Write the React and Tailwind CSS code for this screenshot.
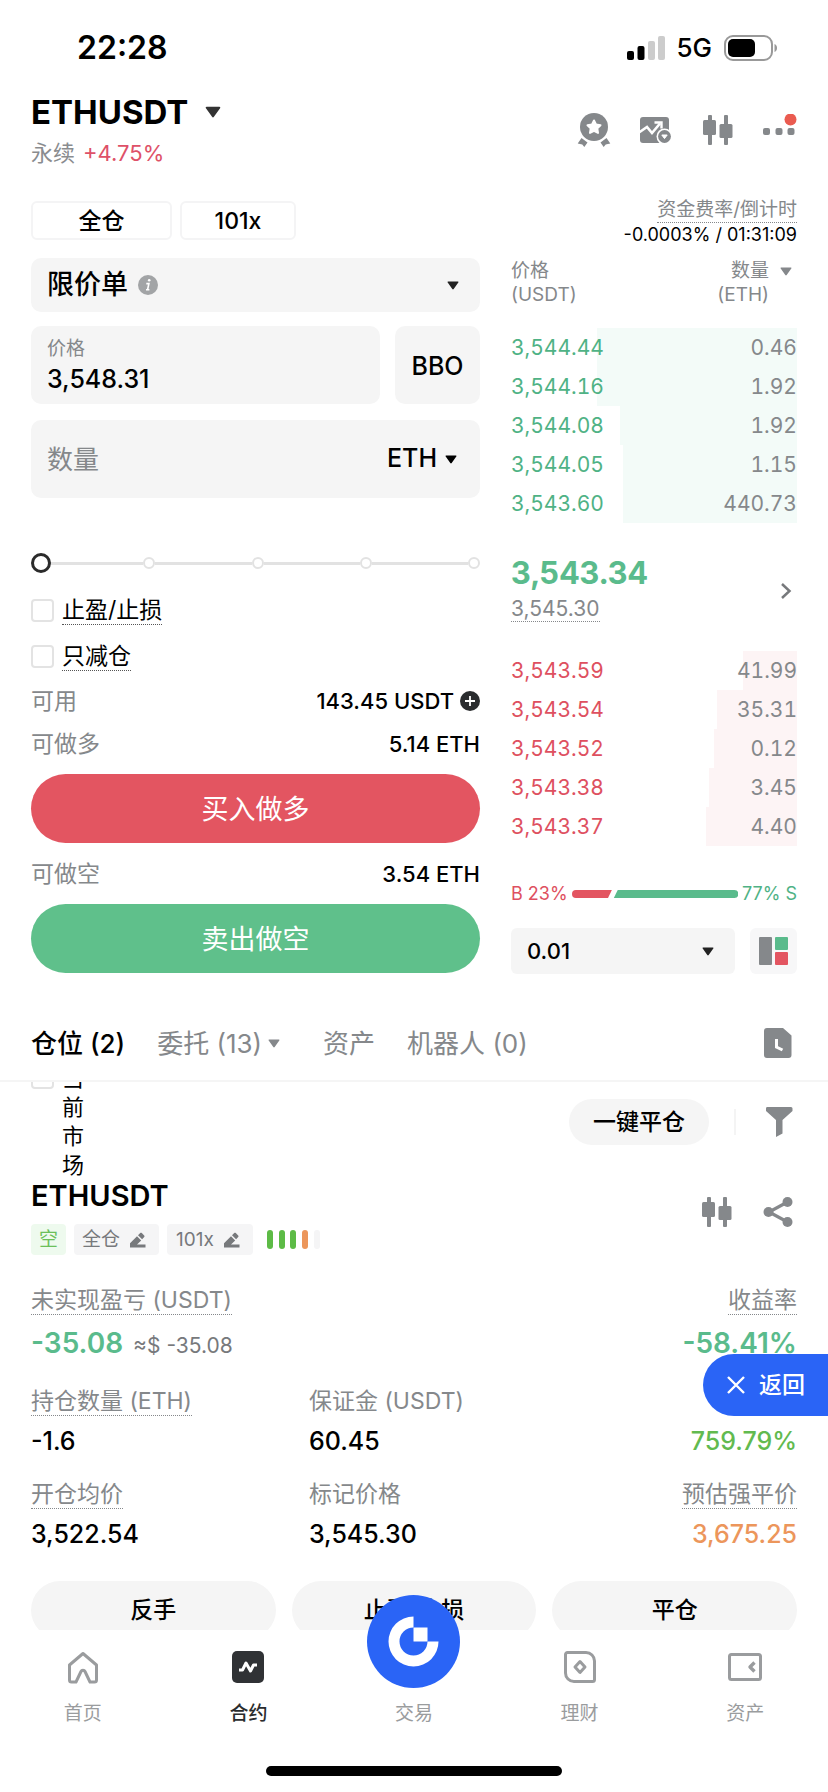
import React, { useState } from "react";

const bids = [
  { price: "3,544.44", amount: "0.46", depth: 70 },
  { price: "3,544.16", amount: "1.92", depth: 70 },
  { price: "3,544.08", amount: "1.92", depth: 62 },
  { price: "3,544.05", amount: "1.15", depth: 61 },
  { price: "3,543.60", amount: "440.73", depth: 61 },
];

const asks = [
  { price: "3,543.59", amount: "41.99", depth: 19 },
  { price: "3,543.54", amount: "35.31", depth: 28 },
  { price: "3,543.52", amount: "0.12", depth: 29 },
  { price: "3,543.38", amount: "3.45", depth: 31 },
  { price: "3,543.37", amount: "4.40", depth: 32 },
];

const Caret = ({ className }) => (
  <svg viewBox="0 0 12 9" className={className} fill="currentColor" aria-hidden="true">
    <path d="M1.2 0.5h9.6c.6 0 .9.7.5 1.1L6.7 8.1a.9.9 0 0 1-1.4 0L.7 1.6C.3 1.2.6.5 1.2.5z" />
  </svg>
);

const CandleIcon = ({ className }) => (
  <svg viewBox="0 0 32 32" className={className} fill="currentColor" aria-hidden="true">
    <rect x="6" y="1" width="4" height="30" rx="1" />
    <rect x="1" y="6" width="13" height="15" rx="1.5" />
    <rect x="22" y="1" width="4" height="30" rx="1" />
    <rect x="17.5" y="10" width="13" height="14" rx="1.5" />
  </svg>
);

const MedalIcon = () => (
  <svg viewBox="0 0 34 36" className="h-9 w-[34px]" aria-hidden="true">
    <circle cx="17" cy="15" r="14" fill="#85888b" />
    <path
      d="M17 8.500l2 4 4.500.7-3.200 3.200.7 4.500-4-2-4 2 .7-4.500-3.200-3.200 4.500-.7z"
      fill="#fff"
      stroke="#fff"
      strokeWidth="2"
      strokeLinejoin="round"
    />
    <path d="M4.500 26l6 4.500-3.200 4.500-2-2.600-4.600-.8z" fill="#85888b" />
    <path d="M29.500 26l-6 4.500 3.200 4.500 2-2.600 4.600-.8z" fill="#85888b" />
  </svg>
);

const ChartIcon = () => (
  <svg viewBox="0 0 34 30" className="h-[30px] w-[34px]" aria-hidden="true">
    <rect x="1" y="2" width="29" height="26" rx="3" fill="#85888b" />
    <path d="M0 17.500l8-5.500 5 6 8-9.500" fill="none" stroke="#fff" strokeWidth="2.600" />
    <path d="M15.500 7.500h7v6" fill="none" stroke="#fff" strokeWidth="2.400" />
    <circle cx="25.500" cy="21.500" r="8" fill="#fff" />
    <circle cx="25.500" cy="21.500" r="6.400" fill="#85888b" />
    <path d="M22.800 20h5.400l-2.700 3.600z" fill="#fff" stroke="#fff" strokeLinejoin="round" />
  </svg>
);

const MoreIcon = () => (
  <svg viewBox="0 0 34 32" className="h-8 w-[34px]" aria-hidden="true">
    <g fill="#85888b">
      <rect x="0" y="14" width="7" height="7" rx="2" />
      <rect x="12.500" y="14" width="7" height="7" rx="2" />
      <rect x="24.500" y="14" width="7" height="7" rx="2" />
    </g>
    <circle cx="27.500" cy="5.500" r="6" fill="#ea5b50" />
  </svg>
);

const EditIcon = () => (
  <svg viewBox="0 0 16 16" className="h-4 w-4" fill="#77797c" aria-hidden="true">
    <path d="M0 15.500v-4.200l7-7 4.200 4.100-4.200 4.100h8.500v3z" />
    <path d="M8 3.300L10.200 1c.5-.5 1.100-.5 1.600 0l2.400 2.400c.5.5.5 1.100 0 1.600L12.100 7.300z" />
  </svg>
);

const StatusBar = () => (
  <div className="flex h-[94px] items-center justify-between pt-[2px] pr-[51px] pl-[77px]">
    <span className="text-[32px] leading-10 font-semibold">22:28</span>
    <div className="flex items-center">
      <svg viewBox="0 0 38 24" className="h-6 w-[38px]" aria-hidden="true">
        <rect x="0" y="15" width="7" height="9" rx="2" />
        <rect x="10.500" y="10" width="7" height="14" rx="2" />
        <rect x="21" y="5" width="7" height="19" rx="2" fill="#ccc" />
        <rect x="31" y="0" width="7" height="24" rx="2" fill="#ccc" />
      </svg>
      <span className="ml-[11px] text-[26px] leading-8 font-medium">5G</span>
      <svg viewBox="0 0 53 26" className="ml-3 h-[26px] w-[53px]" aria-hidden="true">
        <rect x="1" y="1" width="47" height="24" rx="8" fill="none" stroke="#999" strokeWidth="2" />
        <rect x="4" y="4" width="27" height="18" rx="5" />
        <path d="M50.500 9v8c2-.8 2.500-2.300 2.500-4s-.5-3.200-2.500-4z" fill="#999" />
      </svg>
    </div>
  </div>
);

const Header = () => (
  <header className="flex items-center justify-between px-[31px]">
    <div>
      <button className="flex items-center gap-[17px] text-[33px] leading-9 font-bold">
        ETHUSDT
        <Caret className="h-3 w-4 text-[#333]" />
      </button>
      <p className="mt-2 flex items-center gap-2 text-[22px] leading-[30px]">
        <span className="text-[#8a8c8f]">永续</span>
        <span className="text-[#de5168]">+4.75%</span>
      </p>
    </div>
    <div className="flex items-center gap-7 pb-[2px] text-[#85888b]">
      <button aria-label="活动"><MedalIcon /></button>
      <button aria-label="行情"><ChartIcon /></button>
      <button aria-label="K线"><CandleIcon className="h-8 w-[34px]" /></button>
      <button aria-label="更多"><MoreIcon /></button>
    </div>
  </header>
);

const CheckRow = ({ label }) => (
  <label className="flex h-8 items-center gap-2 self-start">
    <input type="checkbox" className="h-[23px] w-[23px] appearance-none rounded-sm border-2 border-[#e3e3e3]" />
    <span className="border-b border-dotted border-[#555] text-[23px] leading-7">{label}</span>
  </label>
);

const InfoRow = ({ label, children }) => (
  <div className="flex h-8 items-center justify-between">
    <span className="text-[23px] text-[#85888b]">{label}</span>
    <span className="flex items-center gap-[6px] text-[22px] font-medium">{children}</span>
  </div>
);

const OrderForm = () => {
  const [price, setPrice] = useState("3,548.31");
  const [amount, setAmount] = useState("");
  const [percent, setPercent] = useState(0);

  return (
    <section className="flex min-w-0 flex-col pt-[5px]">
      <div className="flex gap-2 text-[23px] font-medium">
        <button className="h-[39px] w-[141px] rounded-md border-2 border-[#f4f4f5] leading-7">全仓</button>
        <button className="h-[39px] w-[116px] rounded-md border-2 border-[#f4f4f5] leading-7">101x</button>
      </div>

      <div className="mt-[18px] flex h-[54px] items-center gap-[10px] rounded-[10px] bg-[#f5f5f5] px-4">
        <select
          aria-label="委托类型"
          className="appearance-none bg-transparent text-[27px] font-medium [field-sizing:content]"
        >
          <option>限价单</option>
        </select>
        <svg viewBox="0 0 20 20" className="h-5 w-5" aria-hidden="true">
          <circle cx="10" cy="10" r="10" fill="#a2a4a6" />
          <circle cx="11.200" cy="5.200" r="1.300" fill="#fff" />
          <path d="M8.300 8.600h2.600l-1.300 5.900M8 14.800h3.400" fill="none" stroke="#fff" strokeWidth="1.600" />
        </svg>
        <Caret className="mr-[5px] ml-auto h-[9px] w-3 text-[#222]" />
      </div>

      <div className="mt-[14px] flex h-[78px] gap-[15px]">
        <label className="flex min-w-0 flex-1 flex-col justify-center rounded-[10px] bg-[#f5f5f5] px-4 pt-1">
          <span className="text-[19px] leading-6 text-[#85888b]">价格</span>
          <input
            value={price}
            onChange={(e) => setPrice(e.target.value)}
            className="w-full bg-transparent text-[25px] leading-9 font-medium outline-none"
          />
        </label>
        <button className="w-[85px] rounded-[10px] bg-[#f5f5f5] pt-1 text-[25px] font-medium">BBO</button>
      </div>

      <div className="mt-4 flex h-[78px] items-center rounded-[10px] bg-[#f5f5f5] pr-[23px] pl-4">
        <input
          aria-label="数量"
          placeholder="数量"
          value={amount}
          onChange={(e) => setAmount(e.target.value)}
          className="min-w-0 flex-1 bg-transparent text-[26px] outline-none placeholder:text-[#85888b]"
        />
        <select
          aria-label="单位"
          className="appearance-none bg-transparent text-[25px] font-medium [field-sizing:content]"
        >
          <option>ETH</option>
        </select>
        <Caret className="ml-2 h-[9px] w-3" />
      </div>

      <div className="relative mt-[55px] h-5">
        <div className="flex h-5 items-center justify-between pl-1">
          {[0, 25, 50, 75, 100].map((step, i) => (
            <React.Fragment key={step}>
              {i > 0 && <span className="h-[3px] flex-1 bg-[#e2e2e2]" />}
              <span className="h-3 w-3 rounded-full border-2 border-[#e2e2e2] bg-white" />
            </React.Fragment>
          ))}
        </div>
        <input
          type="range"
          aria-label="仓位比例"
          min="0"
          max="100"
          value={percent}
          onChange={(e) => setPercent(Number(e.target.value))}
          className="absolute inset-0 h-5 w-full appearance-none bg-transparent [&::-webkit-slider-thumb]:h-5 [&::-webkit-slider-thumb]:w-5 [&::-webkit-slider-thumb]:appearance-none [&::-webkit-slider-thumb]:rounded-full [&::-webkit-slider-thumb]:border-[3px] [&::-webkit-slider-thumb]:border-[#2b2b2b] [&::-webkit-slider-thumb]:bg-white"
        />
      </div>

      <div className="mt-[21px] flex flex-col gap-[14px]">
        <CheckRow label="止盈/止损" />
        <CheckRow label="只减仓" />
      </div>

      <div className="mt-[13px] flex flex-col gap-[11px]">
        <InfoRow label="可用">
          143.45 USDT
          <svg viewBox="0 0 20 20" className="h-5 w-5" aria-hidden="true">
            <circle cx="10" cy="10" r="10" fill="#2a2c2e" />
            <path d="M10 5v10M5 10h10" stroke="#fff" strokeWidth="1.800" />
          </svg>
        </InfoRow>
        <InfoRow label="可做多">5.14 ETH</InfoRow>
      </div>
      <button className="mt-[14px] h-[69px] rounded-full bg-[#e35561] pt-1 text-[27px] text-white">买入做多</button>
      <div className="mt-[15px]">
        <InfoRow label="可做空">3.54 ETH</InfoRow>
      </div>
      <button className="mt-[14px] h-[69px] rounded-full bg-[#5fc08b] pt-1 text-[27px] text-white">卖出做空</button>
    </section>
  );
};

const BookRows = ({ rows, priceColor, barColor }) => (
  <tbody>
    {rows.map((row) => (
      <tr
        key={row.price}
        className="h-[39px] text-[21px] tabular-nums"
        style={{ background: `linear-gradient(to left, ${barColor} ${row.depth}%, transparent ${row.depth}%)` }}
      >
        <td className={priceColor}>{row.price}</td>
        <td className="text-right text-[#85888b]">{row.amount}</td>
      </tr>
    ))}
  </tbody>
);

const OrderBook = () => (
  <section className="flex min-w-0 flex-col pt-[2px]">
    <div className="flex flex-col items-end">
      <span className="border-b border-dotted border-[#85888b] text-[19px] leading-6 text-[#85888b]">
        资金费率/倒计时
      </span>
      <span className="text-[18px] leading-6">-0.0003% / 01:31:09</span>
    </div>

    <table aria-label="卖盘" className="mt-3 w-full">
      <thead>
        <tr className="h-[69px] align-top text-[19px] leading-6 text-[#85888b]">
          <th className="text-left font-normal">
            价格
            <br />
            (USDT)
          </th>
          <th className="font-normal">
            <div className="flex items-start justify-end gap-[11px] pr-[5px] text-right">
              <span>
                数量
                <br />
                (ETH)
              </span>
              <Caret className="mt-2 h-[9px] w-3" />
            </div>
          </th>
        </tr>
      </thead>
      <BookRows rows={bids} priceColor="text-[#4fb285]" barColor="#f3fbf8" />
    </table>

    <div className="mt-8 flex items-center justify-between">
      <div className="flex flex-col items-start">
        <span className="text-[31px] leading-9 font-bold text-[#5abb8c] tabular-nums">3,543.34</span>
        <span className="mt-[6px] border-b border-dotted border-[#85888b] text-[21px] leading-6 text-[#85888b]">
          3,545.30
        </span>
      </div>
      <button aria-label="详情" className="mt-1 mr-[5px]">
        <svg viewBox="0 0 12 18" className="h-[18px] w-3" fill="none" stroke="#77797c" strokeWidth="2.500">
          <path d="M2 2l7.500 7-7.500 7" />
        </svg>
      </button>
    </div>

    <table aria-label="买盘" className="mt-[29px] w-full">
      <BookRows rows={asks} priceColor="text-[#de5060]" barColor="#fdf4f5" />
    </table>

    <div className="mt-9 flex items-center gap-1 text-[18px] leading-6">
      <span className="text-[#de5060]">B 23%</span>
      <svg viewBox="0 0 171 8" preserveAspectRatio="none" className="h-2 min-w-0 flex-1" aria-hidden="true">
        <path d="M4 0h37l-4 8H4a4 4 0 0 1 0-8z" fill="#e35561" />
        <path d="M47 0h120a4 4 0 0 1 0 8H43z" fill="#5abb8c" />
      </svg>
      <span className="text-[#4fb285]">77% S</span>
    </div>

    <div className="mt-[22px] flex gap-[15px]">
      <div className="flex h-[46px] flex-1 items-center rounded-md bg-[#f5f5f5] px-4">
        <select
          aria-label="价格精度"
          className="min-w-0 flex-1 appearance-none bg-transparent text-[22px] font-medium"
        >
          <option>0.01</option>
        </select>
        <Caret className="mr-[5px] h-[9px] w-3 text-[#222]" />
      </div>
      <button aria-label="盘口布局" className="flex h-[46px] w-[47px] items-center justify-center rounded-md bg-[#f7f7f8]">
        <svg viewBox="0 0 30 30" className="h-[30px] w-[30px]" aria-hidden="true">
          <rect x="0" y="1" width="13" height="28" rx="1" fill="#85888b" />
          <rect x="16" y="1" width="13" height="13" rx="1" fill="#5abb8c" />
          <rect x="16" y="16" width="13" height="13" rx="1" fill="#e35561" />
        </svg>
      </button>
    </div>
  </section>
);

const Tabs = () => (
  <nav className="mt-8 flex h-[76px] items-center border-b-2 border-[#f5f5f5] pr-[35px] pl-[31px] text-[26px] text-[#85888b]">
    <button className="font-medium text-black">仓位 (2)</button>
    <button className="ml-8 flex items-center gap-[6px]">
      委托 (13)
      <Caret className="h-[9px] w-3" />
    </button>
    <button className="ml-[43px]">资产</button>
    <button className="ml-8">机器人 (0)</button>
    <button aria-label="历史记录" className="ml-auto">
      <svg viewBox="0 0 30 32" className="h-8 w-[30px]" aria-hidden="true">
        <path d="M4 1h16l8.500 7.500V28a3 3 0 0 1-3 3H4a3 3 0 0 1-3-3V4a3 3 0 0 1 3-3z" fill="#85888b" />
        <path d="M13.500 12v8l6 3" fill="none" stroke="#fff" strokeWidth="3" />
      </svg>
    </button>
  </nav>
);

// the list is scrolled a little, so its first row runs under the tabs
const MarketFilter = () => (
  <div className="flex h-[99px] items-start justify-between overflow-hidden pr-[35px] pl-[31px]">
    <label className="-mt-[18px] flex items-start gap-2">
      <input type="checkbox" className="mt-[2px] h-[23px] w-[23px] appearance-none rounded-sm border-2 border-[#e3e3e3]" />
      <span className="w-[23px] text-[22px] leading-[29px] break-all">当前市场</span>
    </label>
    <div className="flex h-20 items-center">
      <button className="h-[46px] rounded-full bg-[#f5f5f5] px-6 text-[23px] font-medium">一键平仓</button>
      <span className="mx-[25px] h-[26px] w-[2px] bg-[#f4f4f4]" />
      <button aria-label="筛选" className="ml-1">
        <svg viewBox="0 0 28 32" className="h-8 w-7" fill="#85888b" aria-hidden="true">
          <path d="M2 1h24a1.500 1.500 0 0 1 1.500 1.500V5L17.500 14v13.500L11 31V14L1 5V2.500A1.500 1.500 0 0 1 2 1z" />
        </svg>
      </button>
    </div>
  </div>
);

const Stat = ({ label, value, className, right, dotted }) => (
  <div className={right ? "flex flex-col items-end" : "flex flex-col items-start"}>
    <dt
      className={
        dotted
          ? "border-b border-dotted border-[#85888b] text-[23px] leading-7 text-[#85888b]"
          : "border-b border-transparent text-[23px] leading-7 text-[#85888b]"
      }
    >
      {label}
    </dt>
    <dd className={className}>{value}</dd>
  </div>
);

const statValue = "mt-[9px] text-[25px] leading-8 font-medium";

const Position = () => (
  <section className="px-[31px]">
    <div className="flex items-center justify-between pr-1">
      <div>
        <h2 className="text-[29px] leading-[30px] font-semibold">ETHUSDT</h2>
        <div className="mt-[13px] flex items-center gap-2 text-[19px] leading-[31px] text-[#77797c]">
          <span className="rounded bg-[#eefaee] px-2 text-[#6cc05a]">空</span>
          <button className="flex items-center gap-[10px] rounded bg-[#f5f5f6] pr-[13px] pl-2">
            全仓 <EditIcon />
          </button>
          <button className="flex items-center gap-[10px] rounded bg-[#f5f5f6] pr-[13px] pl-[9px]">
            101x <EditIcon />
          </button>
          <svg viewBox="0 0 54 20" className="ml-[6px] h-5 w-[54px]" aria-hidden="true">
            <g fill="#5dbb46">
              <rect x="0" y="0" width="6" height="19" rx="3" />
              <rect x="12" y="0" width="6" height="19" rx="3" />
              <rect x="23" y="0" width="6" height="19" rx="3" />
            </g>
            <rect x="35" y="0" width="6" height="19" rx="3" fill="#ec965b" />
            <rect x="47" y="0" width="6" height="19" rx="3" fill="#f5f5f6" />
          </svg>
        </div>
      </div>
      <div className="flex items-center gap-[30px] pb-3 text-[#85888b]">
        <button aria-label="K线"><CandleIcon className="h-8 w-8" /></button>
        <button aria-label="分享">
          <svg viewBox="0 0 30 32" className="h-8 w-[30px]" fill="currentColor" aria-hidden="true">
            <path d="M24.500 6L6 16l18.500 10" fill="none" stroke="currentColor" strokeWidth="3.200" />
            <circle cx="24.500" cy="6" r="5" />
            <circle cx="5.500" cy="16" r="5" />
            <circle cx="24.500" cy="26" r="5" />
          </svg>
        </button>
      </div>
    </div>

    <dl className="mt-[31px] flex justify-between">
      <Stat
        dotted
        label="未实现盈亏 (USDT)"
        className="mt-3 flex items-baseline gap-[10px] text-[28px] leading-8 font-semibold text-[#5abb8c]"
        value={
          <>
            -35.08 <span className="text-[21px] font-normal text-[#77797c]">≈$ -35.08</span>
          </>
        }
      />
      <Stat
        dotted
        right
        label="收益率"
        className="mt-3 text-[28px] leading-8 font-semibold text-[#5abb8c]"
        value="-58.41%"
      />
    </dl>
    <dl className="mt-[25px] grid grid-cols-[278fr_278fr_210fr] gap-y-[23px]">
      <Stat dotted label="持仓数量 (ETH)" value="-1.6" className={statValue} />
      <Stat label="保证金 (USDT)" value="60.45" className={statValue} />
      <Stat right label={"\u00a0"} value="759.79%" className="mt-[9px] text-[25px] leading-8 font-medium text-[#62ba4f]" />
      <Stat dotted label="开仓均价" value="3,522.54" className={statValue} />
      <Stat label="标记价格" value="3,545.30" className={statValue} />
      <Stat dotted right label="预估强平价" value="3,675.25" className="mt-[9px] text-[25px] leading-8 font-medium text-[#ec965b]" />
    </dl>

    <div className="mt-[31px] grid grid-cols-3 gap-4 text-[23px] font-medium">
      <button className="h-[58px] rounded-full bg-[#f5f5f5]">反手</button>
      <button className="h-[58px] rounded-full bg-[#f5f5f5]">止盈/止损</button>
      <button className="h-[58px] rounded-full bg-[#f5f5f5]">平仓</button>
    </div>
  </section>
);

const NavItem = ({ label, active, children }) => (
  <a
    href="#"
    className={
      active
        ? "flex flex-1 flex-col items-center gap-[18px] text-[#2a2c2e]"
        : "flex flex-1 flex-col items-center gap-[18px] text-[#9a9c9e]"
    }
  >
    {children}
    <span className={active ? "text-[19px] leading-6 font-medium" : "text-[19px] leading-6"}>{label}</span>
  </a>
);

const BottomNav = () => (
  <footer className="fixed inset-x-0 bottom-0 flex h-[162px] flex-col items-center justify-between bg-white pt-5 pb-4">
    <nav className="flex w-full">
      <NavItem label="首页">
        <svg viewBox="0 0 34 34" className="h-[34px] w-[34px]" fill="none" stroke="currentColor" strokeWidth="3" strokeLinejoin="round" aria-hidden="true">
          <path d="M17 3.500L30.500 15v15a2 2 0 0 1-2 2H24l-5-10.500c-.8-1.700-3.200-1.700-4 0L10 32H5.500a2 2 0 0 1-2-2V15z" />
        </svg>
      </NavItem>
      <NavItem label="合约" active>
        <svg viewBox="0 0 34 34" className="h-[34px] w-[34px]" aria-hidden="true">
          <rect x="1" y="1" width="32" height="32" rx="5" fill="#303235" />
          <path d="M8 20h3.500l3.500-7 4.500 8 3-6H26" fill="none" stroke="#fff" strokeWidth="3" strokeLinejoin="round" />
        </svg>
      </NavItem>
      <NavItem label="交易">
        <span className="relative h-[34px] w-[93px]">
          <svg viewBox="0 0 93 93" className="absolute -bottom-1 left-0 h-[93px] w-[93px]" aria-hidden="true">
            <circle cx="46.500" cy="46.500" r="46.500" fill="#2a64f6" />
            <path d="M46.500 21.500a25 25 0 1 0 25 25h-11a14 14 0 1 1-14-14z" fill="#fff" />
            <rect x="46.500" y="32.500" width="14" height="14" fill="#fff" />
          </svg>
        </span>
      </NavItem>
      <NavItem label="理财">
        <svg viewBox="0 0 34 34" className="h-[34px] w-[34px]" fill="none" stroke="currentColor" strokeWidth="3" strokeLinejoin="round" aria-hidden="true">
          <path d="M4.500 2.500H23a8.500 8.500 0 0 1 8.500 8.500v18.500a2 2 0 0 1-2 2H11A8.500 8.500 0 0 1 2.500 23V4.500a2 2 0 0 1 2-2z" />
          <path d="M17 11.500l5 5.500-5 5.500-5-5.500z" />
        </svg>
      </NavItem>
      <NavItem label="资产">
        <svg viewBox="0 0 34 34" className="h-[34px] w-[34px]" fill="none" stroke="currentColor" strokeWidth="3" strokeLinejoin="round" aria-hidden="true">
          <rect x="1.500" y="4.500" width="31" height="25" rx="2" />
          <path d="M26.500 12.500L22 17l4.500 4.500" strokeWidth="3.400" />
        </svg>
      </NavItem>
    </nav>
    <span className="h-[10px] w-[296px] rounded-full bg-black" />
  </footer>
);

const App = () => (
  <div className="bg-white pb-[150px] font-['Inter','Noto_Sans_CJK_SC',sans-serif] text-black">
    <StatusBar />
    <Header />
    <main>
      <div className="mt-7 grid grid-cols-[449fr_286fr] gap-[31px] px-[31px]">
        <OrderForm />
        <OrderBook />
      </div>
      <Tabs />
      <MarketFilter />
      <Position />
    </main>
    <button className="fixed right-0 bottom-[376px] flex h-[62px] items-center gap-[14px] rounded-l-full bg-[#2a64f6] pr-[23px] pl-6 text-[23px] font-medium text-white">
      <svg viewBox="0 0 18 18" className="h-[18px] w-[18px]" stroke="#fff" strokeWidth="2.400" aria-hidden="true">
        <path d="M1 1l16 16M17 1L1 17" />
      </svg>
      返回
    </button>
    <BottomNav />
  </div>
);

export default App;
